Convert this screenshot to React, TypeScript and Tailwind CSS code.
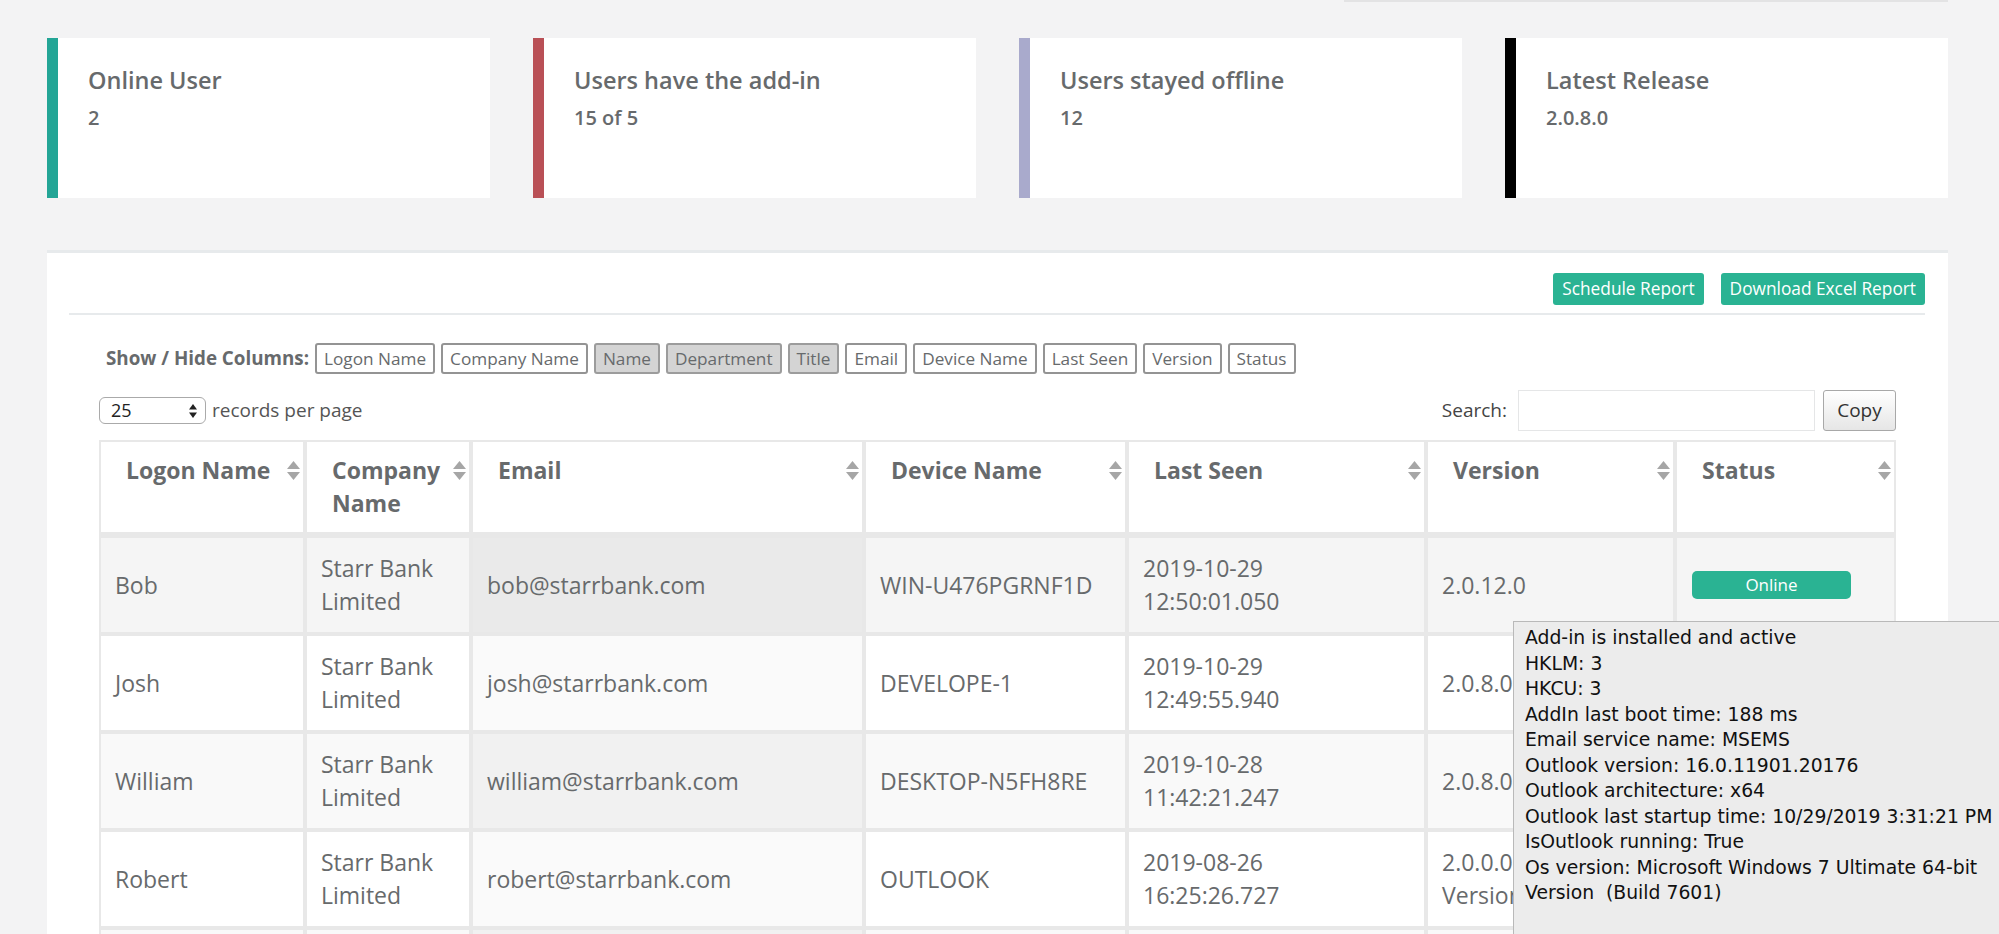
import React from "react";

const SortIcon = () => (
  <svg width="13" height="19" viewBox="0 0 13 19" className="shrink-0 mt-[7px]">
    <polygon points="0,8 6.5,0 13,8" fill="#a6a6a6" />
    <polygon points="0,11 13,11 6.5,19" fill="#a6a6a6" />
  </svg>
);

const cards = [
  { title: "Online User", value: "2", bar: "bg-[#23a596]" },
  { title: "Users have the add-in", value: "15 of 5", bar: "bg-[#b95056]" },
  { title: "Users stayed offline", value: "12", bar: "bg-[#a9aacc]" },
  { title: "Latest Release", value: "2.0.8.0", bar: "bg-[#000000]" },
];

const toggles: { label: string; off?: boolean }[] = [
  { label: "Logon Name" },
  { label: "Company Name" },
  { label: "Name", off: true },
  { label: "Department", off: true },
  { label: "Title", off: true },
  { label: "Email" },
  { label: "Device Name" },
  { label: "Last Seen" },
  { label: "Version" },
  { label: "Status" },
];

type Row = {
  logon: string;
  email: string;
  device: string;
  date: string;
  time: string;
  version: string[];
  online: boolean;
  bg: string;
  emailBg: string;
};

const rows: Row[] = [
  {
    logon: "Bob",
    email: "bob@starrbank.com",
    device: "WIN-U476PGRNF1D",
    date: "2019-10-29",
    time: "12:50:01.050",
    version: ["2.0.12.0"],
    online: true,
    bg: "bg-[#f5f5f5]",
    emailBg: "bg-[#eaeaea]",
  },
  {
    logon: "Josh",
    email: "josh@starrbank.com",
    device: "DEVELOPE-1",
    date: "2019-10-29",
    time: "12:49:55.940",
    version: ["2.0.8.0"],
    online: true,
    bg: "bg-white",
    emailBg: "bg-[#fafafa]",
  },
  {
    logon: "William",
    email: "william@starrbank.com",
    device: "DESKTOP-N5FH8RE",
    date: "2019-10-28",
    time: "11:42:21.247",
    version: ["2.0.8.0"],
    online: false,
    bg: "bg-[#f9f9f9]",
    emailBg: "bg-[#f1f1f1]",
  },
  {
    logon: "Robert",
    email: "robert@starrbank.com",
    device: "OUTLOOK",
    date: "2019-08-26",
    time: "16:25:26.727",
    version: ["2.0.0.0 Old", "Version"],
    online: false,
    bg: "bg-white",
    emailBg: "bg-[#fafafa]",
  },
  {
    logon: "James",
    email: "james@starrbank.com",
    device: "LAPTOP-7K2M",
    date: "2019-08-20",
    time: "09:14:10.113",
    version: ["2.0.8.0"],
    online: false,
    bg: "bg-[#f9f9f9]",
    emailBg: "bg-[#f1f1f1]",
  },
];

const headers = [
  "Logon Name",
  "Company Name",
  "Email",
  "Device Name",
  "Last Seen",
  "Version",
  "Status",
];

const tooltipLines = [
  "Add-in is installed and active",
  "HKLM: 3",
  "HKCU: 3",
  "AddIn last boot time: 188 ms",
  "Email service name: MSEMS",
  "Outlook version: 16.0.11901.20176",
  "Outlook architecture: x64",
  "Outlook last startup time: 10/29/2019 3:31:21 PM",
  "IsOutlook running: True",
  "Os version: Microsoft Windows 7 Ultimate 64-bit",
  "Version  (Build 7601)",
];

export default function App() {
  const td =
    "border-2 border-[#e8e8e8] px-[14px] py-[14px] align-middle text-[23px] leading-[33px] text-[#676a6c]";
  return (
    <div className="relative w-[1999px] h-[934px] overflow-hidden bg-[#f3f3f4] font-['Open_Sans',sans-serif]">
      {/* top strip */}
      <div className="flex justify-end pr-[51px]">
        <div className="w-[604px] h-[2px] bg-[#e3e3e4]" />
      </div>

      <div className="pl-[47px] pr-[51px]">
        {/* stat cards */}
        <div className="mt-[36px] grid grid-cols-4 gap-x-[43px] h-[160px]">
          {cards.map((c) => (
            <div key={c.title} className="flex bg-white">
              <div className={`w-[11px] ${c.bar}`} />
              <div className="pl-[30px] pt-[26px] text-[#676a6c]">
                <div className="text-[23.5px] leading-[32px] font-semibold">{c.title}</div>
                <div className="mt-[8px] text-[20px] leading-[28px] font-semibold">{c.value}</div>
              </div>
            </div>
          ))}
        </div>

        {/* main panel */}
        <div className="mt-[52px] bg-white border-t-[3px] border-[#e7eaec] h-[700px]">
          <div className="ml-[22px] mr-[23px] pt-[20px] pb-[8px] border-b-2 border-[#e7eaec] flex justify-end gap-[17px]">
            <button className="h-[32px] px-[9px] rounded-[3px] bg-[#2ab393] text-white text-[17.3px] leading-[32px]">
              Schedule Report
            </button>
            <button className="h-[32px] px-[9px] rounded-[3px] bg-[#2ab393] text-white text-[17.3px] leading-[32px]">
              Download Excel Report
            </button>
          </div>

          <div className="px-[52px]">
            {/* show / hide */}
            <div className="mt-[28px] pl-[7px] flex items-center h-[31px]">
              <span className="text-[18.8px] font-bold text-[#676a6c] mr-[6px]">Show / Hide Columns:</span>
              <div className="flex gap-[6px]">
                {toggles.map((t) => (
                  <span
                    key={t.label}
                    className={`h-[31px] px-[7px] border-2 rounded-[3px] text-[17.2px] leading-[27px] text-[#676a6c] ${
                      t.off ? "bg-[#d4d4d4] border-[#9c9c9c]" : "bg-white border-[#949494]"
                    }`}
                  >
                    {t.label}
                  </span>
                ))}
              </div>
            </div>

            {/* controls */}
            <div className="mt-[16px] h-[41px] flex items-center justify-between w-[1797px]">
              <div className="flex items-center">
                <div className="w-[107px] h-[27px] border border-[#aaaaaa] rounded-[6px] bg-white flex items-center justify-between pl-[11px] pr-[8px]">
                  <span className="text-[18px] text-[#222] leading-[25px]">25</span>
                  <svg width="8" height="14" viewBox="0 0 8 14">
                    <polygon points="0,5.5 4,0 8,5.5" fill="#222" />
                    <polygon points="0,8.5 8,8.5 4,14" fill="#222" />
                  </svg>
                </div>
                <span className="ml-[6px] text-[19px] text-[#555]">records per page</span>
              </div>
              <div className="flex items-center">
                <span className="text-[19px] text-[#444]">Search:</span>
                <div className="ml-[11px] w-[297px] h-[41px] border border-[#e5e6e7] bg-white" />
                <button className="ml-[8px] w-[73px] h-[41px] border border-[#a8a8a8] rounded-[3px] bg-gradient-to-b from-white to-[#e6e6e6] text-[19px] text-[#333]">
                  Copy
                </button>
              </div>
            </div>

            {/* table */}
            <table className="mt-[9px] w-[1797px] table-fixed border-separate border-spacing-0">
              <colgroup>
                <col className="w-[206px]" />
                <col className="w-[166px]" />
                <col className="w-[393px]" />
                <col className="w-[263px]" />
                <col className="w-[299px]" />
                <col className="w-[249px]" />
                <col className="w-[221px]" />
              </colgroup>
              <thead>
                <tr>
                  {headers.map((h) => (
                    <th
                      key={h}
                      className="border-2 border-b-4 border-[#e8e8e8] bg-white pl-[25px] pr-[3px] pt-[12px] pb-[12px] align-top text-left"
                    >
                      <div className="flex items-start justify-between h-[66px]">
                        <span className="text-[23px] leading-[33px] font-bold text-[#676a6c] pr-[8px]">{h}</span>
                        <SortIcon />
                      </div>
                    </th>
                  ))}
                </tr>
              </thead>
              <tbody>
                {rows.map((r) => (
                  <tr key={r.logon} className={r.bg}>
                    <td className={td}>{r.logon}</td>
                    <td className={td}>
                      Starr Bank
                      <br />
                      Limited
                    </td>
                    <td className={`${td} ${r.emailBg}`}>{r.email}</td>
                    <td className={td}>{r.device}</td>
                    <td className={td}>
                      {r.date}
                      <br />
                      {r.time}
                    </td>
                    <td className={td}>
                      {r.version.map((v, i) => (
                        <div key={i}>{v}</div>
                      ))}
                    </td>
                    <td className={`${td} px-[15px]`}>
                      <div
                        className={`w-[159px] h-[28px] rounded-[5px] text-white text-[17px] leading-[28px] text-center ${
                          r.online ? "bg-[#2ab393]" : "bg-[#c2c2c2]"
                        }`}
                      >
                        {r.online ? "Online" : "Offline"}
                      </div>
                    </td>
                  </tr>
                ))}
              </tbody>
            </table>
          </div>
        </div>
      </div>

      {/* tooltip */}
      <div className="absolute left-[1513px] top-[621px] w-[540px] h-[340px] bg-[#ececec] border border-[#b9b9b9] pl-[11px] pt-[3px] font-['DejaVu_Sans',sans-serif] text-[18.8px] leading-[25.5px] text-[#111]">
        {tooltipLines.map((l) => (
          <div key={l} className="whitespace-pre">
            {l}
          </div>
        ))}
      </div>
    </div>
  );
}
